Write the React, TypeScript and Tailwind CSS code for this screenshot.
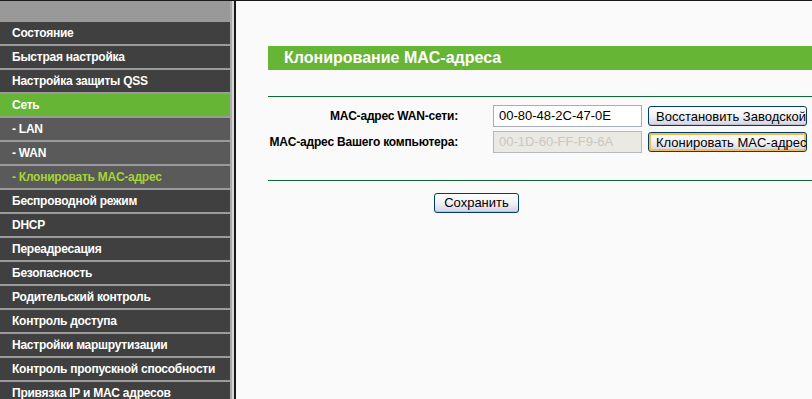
const menu: { label: string; sub?: boolean; active?: boolean; current?: boolean }[] = [
  { label: "Состояние" },
  { label: "Быстрая настройка" },
  { label: "Настройка защиты QSS" },
  { label: "Сеть", active: true },
  { label: "- LAN", sub: true },
  { label: "- WAN", sub: true },
  { label: "- Клонировать MAC-адрес", sub: true, current: true },
  { label: "Беспроводной режим" },
  { label: "DHCP" },
  { label: "Переадресация" },
  { label: "Безопасность" },
  { label: "Родительский контроль" },
  { label: "Контроль доступа" },
  { label: "Настройки маршрутизации" },
  { label: "Контроль пропускной способности" },
  { label: "Привязка IP и MAC адресов" },
];

function Sidebar() {
  return (
    <div className="flex h-full w-[230px] shrink-0 flex-col gap-[2px] bg-[#9a9a9a]">
      <div className="h-[19px] shrink-0 bg-[#999999]" />
      {menu.map((item) => {
        let cls = "bg-[#404040] text-white";
        if (item.active) cls = "bg-[#66b534] text-white";
        else if (item.current) cls = "bg-[#5a5a5a] text-[#a5d534]";
        else if (item.sub) cls = "bg-[#5a5a5a] text-white";
        return (
          <div
            key={item.label}
            className={`flex h-[22px] shrink-0 items-center pl-[12px] text-[12px] font-bold tracking-[-0.25px] whitespace-nowrap ${cls}`}
          >
            {item.label}
          </div>
        );
      })}
    </div>
  );
}

function XpButton({ children, focused, className = "" }: { children: React.ReactNode; focused?: boolean; className?: string }) {
  return (
    <button
      className={`h-[20px] overflow-hidden rounded-[3px] border border-[#003c74] bg-gradient-to-b from-white via-[#f2f2f5] to-[#d2d2e4] text-[13px] leading-none whitespace-nowrap text-black ${
        focused ? "shadow-[inset_0_0_0_2px_#f6bd4a]" : "shadow-[inset_0_-1px_0_#c0c0d8]"
      } ${className}`}
    >
      {children}
    </button>
  );
}

export default function App() {
  return (
    <div
      className="flex h-[399px] w-[812px] flex-col overflow-hidden bg-[#fafafa]"
      style={{ fontFamily: '"Liberation Sans", Arial, sans-serif' }}
    >
      <div className="h-px shrink-0 bg-[#1a1a1a]" />
      <div className="flex min-h-0 flex-1">
        <Sidebar />
        <div className="w-[2px] shrink-0 bg-[#ababab]" />
        <div className="w-[2px] shrink-0 bg-[#d6d6d6]" />
        <div className="w-[2px] shrink-0 bg-[#1a1a1a]" />
        <div className="flex min-w-0 flex-1 flex-col pt-[45px] pl-[32px]">
          <div className="flex h-[24px] items-center bg-[#66b534] pl-[16px] text-[16px] font-bold text-white">
            Клонирование MAC-адреса
          </div>
          <div className="mt-[26px] h-px bg-[#0a6b35]" />
          <div className="mt-[8px] flex flex-col gap-[4px]">
            <div className="flex h-[22px] items-center">
              <div className="flex w-[190px] justify-end text-[12px] font-bold tracking-[-0.2px] whitespace-nowrap text-black">
                MAC-адрес WAN-сети:
              </div>
              <div className="ml-[35px] flex h-[22px] w-[149px] items-center border border-[#a5acb5] bg-white pl-[5px] text-[13px] text-black">
                00-80-48-2C-47-0E
              </div>
              <XpButton className="ml-[6px] w-[159px] pl-[7px] text-left">Восстановить Заводской</XpButton>
            </div>
            <div className="flex h-[22px] items-center">
              <div className="flex w-[190px] justify-end text-[12px] font-bold tracking-[-0.2px] whitespace-nowrap text-black">
                MAC-адрес Вашего компьютера:
              </div>
              <div className="ml-[35px] flex h-[22px] w-[149px] items-center border border-[#b5b8bc] bg-[#ebe9e3] pl-[5px] text-[13px] text-[#c9c7c2]">
                00-1D-60-FF-F9-6A
              </div>
              <XpButton focused className="ml-[6px] w-[159px] pl-[7px] text-left">
                Клонировать MAC-адрес
              </XpButton>
            </div>
          </div>
          <div className="mt-[27px] h-px bg-[#0a6b35]" />
          <div className="mt-[9px] pl-[166px]">
            <XpButton className="w-[85px]">Сохранить</XpButton>
          </div>
        </div>
      </div>
    </div>
  );
}
